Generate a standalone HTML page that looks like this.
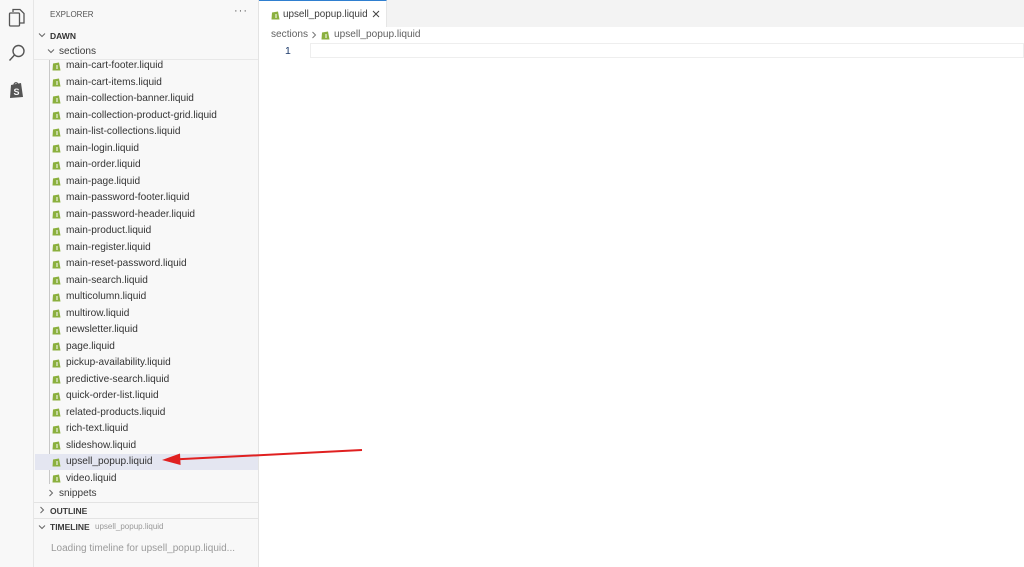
<!DOCTYPE html>
<html><head><meta charset="utf-8"><style>
*{margin:0;padding:0;box-sizing:border-box}
body{width:1024px;height:567px;overflow:hidden;background:#fff;font-family:"Liberation Sans",sans-serif;position:relative;color:#333}
.act{position:absolute;left:0;top:0;width:34px;height:567px;background:#f8f8f8;border-right:1px solid #e6e6e6}
.side{position:absolute;left:34px;top:0;width:225px;height:567px;background:#f8f8f8;border-right:1px solid #e3e3e3}
.t{position:absolute;white-space:nowrap;font-size:10.5px;color:#3b3b3b}
.row{position:absolute;left:1px;width:223px;height:16.5px}
.ic{position:absolute;left:17px;top:3px;width:9px;height:10px}
.row span{position:absolute;left:31px;top:2.5px;font-size:10.1px;color:#333;white-space:nowrap}
.tabs{position:absolute;left:259px;top:0;right:0;height:27px;background:#f3f3f3}
.tab{position:absolute;left:0;top:0;width:128px;height:27px;background:#fff;border-top:1px solid #2f7fd0;border-right:1px solid #e6e6e6}
.ch{position:absolute}
</style></head><body>
<div class="act">
<svg style="position:absolute;left:8px;top:8px" width="18" height="20" viewBox="0 0 18 20" fill="none" stroke="#555" stroke-width="1.3"><path d="M5 4V1.5h7l4 4V15H12"/><rect x="1.5" y="5" width="10" height="13" rx="1"/></svg>
<svg style="position:absolute;left:8px;top:44px" width="18" height="18" viewBox="0 0 18 18" fill="none" stroke="#555" stroke-width="1.4"><circle cx="10.5" cy="7" r="5.5"/><path d="M6.5 11L1.5 16.5"/></svg>
<svg style="position:absolute;left:8px;top:80px" width="17" height="19" viewBox="0 0 17 19"><path d="M3 5l10-2 2 14-13 1z" fill="#555"/><path d="M6 5c0-3 4-3 4 0" fill="none" stroke="#555" stroke-width="1.2"/><text x="5.5" y="15" font-size="9" font-weight="bold" fill="#f8f8f8" font-family="Liberation Sans">S</text></svg>
</div>
<div class="side">
<div class="t" style="left:16px;top:10px;font-size:8px;color:#555">EXPLORER</div>
<div class="t" style="left:200px;top:5px;font-size:11px;color:#555;letter-spacing:1px">···</div>
<svg class="ch" style="left:4px;top:32px" width="8" height="6" viewBox="0 0 8 6"><path d="M1 1.5l3 3 3-3" fill="none" stroke="#666" stroke-width="1"/></svg>
<div class="t" style="left:16px;top:31px;font-size:8.5px;font-weight:bold;color:#333">DAWN</div>
<svg class="ch" style="left:13px;top:48px" width="8" height="6" viewBox="0 0 8 6"><path d="M1 1.5l3 3 3-3" fill="none" stroke="#666" stroke-width="1"/></svg>
<div class="t" style="left:25px;top:46px;font-size:10.1px">sections</div>
<div style="position:absolute;left:0;top:59px;width:224px;height:1px;background:#e8e8e8"></div>
<div style="position:absolute;left:15px;top:60px;width:1px;height:424px;background:#c8c8c8"></div>
<div id="files"></div>
<svg class="ch" style="left:14px;top:489px" width="6" height="8" viewBox="0 0 6 8"><path d="M1.5 1l3 3-3 3" fill="none" stroke="#666" stroke-width="1"/></svg>
<div class="t" style="left:25px;top:488px;font-size:10.1px">snippets</div>
<div style="position:absolute;left:0;top:502px;width:224px;height:1px;background:#e3e3e3"></div>
<svg class="ch" style="left:5px;top:506px" width="6" height="8" viewBox="0 0 6 8"><path d="M1.5 1l3 3-3 3" fill="none" stroke="#666" stroke-width="1"/></svg>
<div class="t" style="left:16px;top:506px;font-size:8.5px;font-weight:bold">OUTLINE</div>
<div style="position:absolute;left:0;top:518px;width:224px;height:1px;background:#e3e3e3"></div>
<svg class="ch" style="left:4px;top:524px" width="8" height="6" viewBox="0 0 8 6"><path d="M1 1.5l3 3 3-3" fill="none" stroke="#666" stroke-width="1"/></svg>
<div class="t" style="left:16px;top:522px;font-size:8.5px;font-weight:bold">TIMELINE</div>
<div class="t" style="left:61px;top:522px;font-size:8px;color:#999">upsell_popup.liquid</div>
<div class="t" style="left:17px;top:543px;font-size:10px;color:#9a9a9a">Loading timeline for upsell_popup.liquid...</div>
</div>
<div class="tabs"><div class="tab">
<svg style="position:absolute;left:12px;top:9px" width="9" height="10" viewBox="0 0 9 10"><path d="M1 2.5L7 1.5 8.5 9.5 0.5 9.5z" fill="#8bb03e"/><path d="M4 5h2M4 7h2" stroke="#fff" stroke-width="1"/></svg>
<div class="t" style="left:24px;top:8px;font-size:9.9px">upsell_popup.liquid</div>
<svg style="position:absolute;left:113px;top:9px" width="8" height="8" viewBox="0 0 8 8"><path d="M1 1l6 6M7 1L1 7" stroke="#444" stroke-width="1"/></svg>
</div></div>
<div class="t" style="left:271px;top:29px;font-size:10.1px;color:#616161">sections</div>
<svg class="ch" style="left:311px;top:31px" width="6" height="8" viewBox="0 0 6 8"><path d="M1.5 1l3 3-3 3" fill="none" stroke="#777" stroke-width="1"/></svg>
<svg style="position:absolute;left:321px;top:30px" width="9" height="10" viewBox="0 0 9 10"><path d="M1 2.5L7 1.5 8.5 9.5 0.5 9.5z" fill="#8bb03e"/><path d="M4 5h2M4 7h2" stroke="#fff" stroke-width="1"/></svg>
<div class="t" style="left:334px;top:29px;font-size:10.1px;color:#616161">upsell_popup.liquid</div>
<div class="t" style="left:285px;top:45px;font-size:10.5px;color:#1c3a6b">1</div>
<div style="position:absolute;left:310px;top:43px;right:0;height:15px;border:1px solid #eeeeee"></div>
<svg style="position:absolute;left:0;top:0" width="1024" height="567"><path d="M362 450L178 459.3" stroke="#e02020" stroke-width="2"/><path d="M162 460L180 453.5 180.6 465z" fill="#e02020"/></svg>
<script>
var f=["main-cart-footer","main-cart-items","main-collection-banner","main-collection-product-grid","main-list-collections","main-login","main-order","main-page","main-password-footer","main-password-header","main-product","main-register","main-reset-password","main-search","multicolumn","multirow","newsletter","page","pickup-availability","predictive-search","quick-order-list","related-products","rich-text","slideshow","upsell_popup","video"];
var h="";f.forEach(function(n,i){var y=57.5+i*16.5;h+='<div class="row" style="top:'+y+'px;'+(n=="upsell_popup"?'background:#e4e6f1;':'')+'"><svg class="ic" viewBox="0 0 9 10"><path d="M1 2.5L7 1.5 8.5 9.5 0.5 9.5z" fill="#8bb03e"/><path d="M4 5h2M4 7h2" stroke="#fff" stroke-width="1"/></svg><span>'+n+'.liquid</span></div>';});
document.getElementById("files").innerHTML=h;
</script>
</body></html>
